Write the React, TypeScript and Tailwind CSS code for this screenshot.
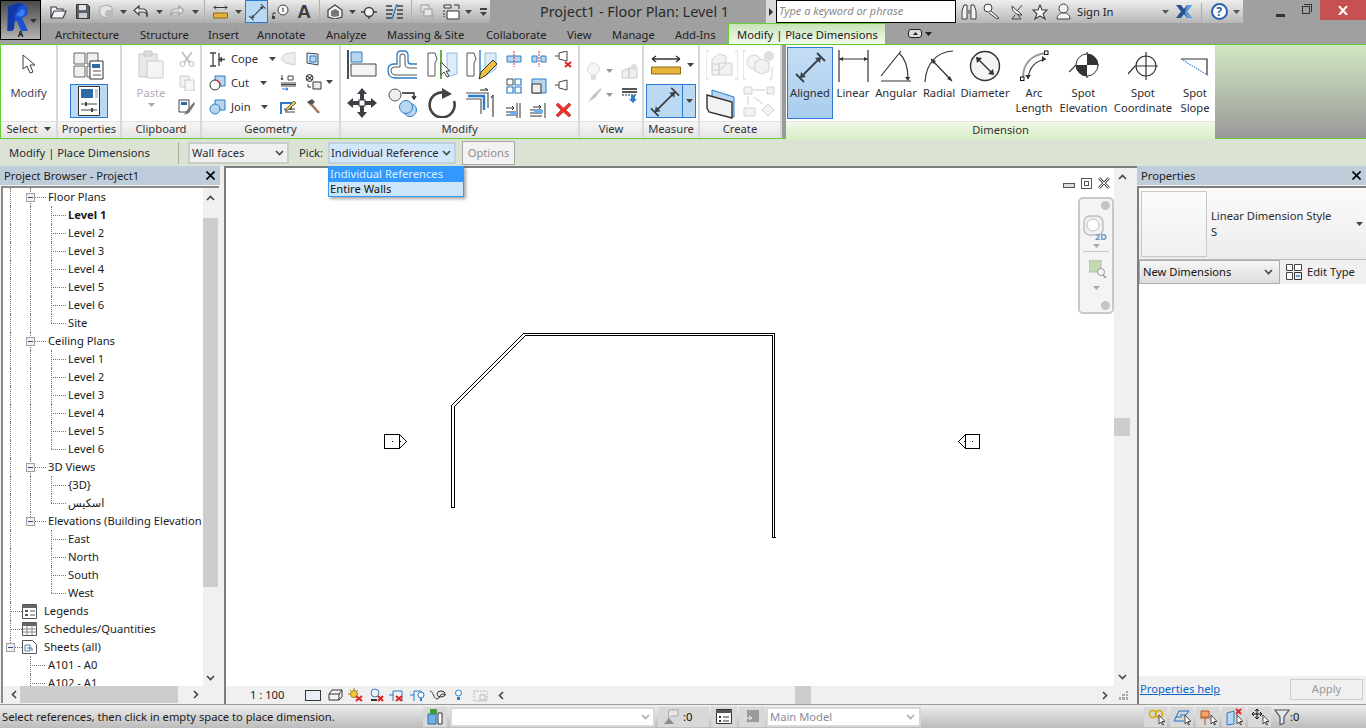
import type { ReactNode } from 'react';

const D = '#3a4047';
const B = '#2b7cc9';
const L = '#b8d6ef';
const G2 = '#e4e4e4';

function Ic({ w, h, children }: { w: number; h: number; children: ReactNode }) {
    return (
        <svg width={w} height={h} viewBox={`0 0 ${w} ${h}`} fill="none" className="shrink-0 block">
            {children}
        </svg>
    );
}

function Arrow({ c = '#444' }: { c?: string }) {
    return (
        <svg width="7" height="4" viewBox="0 0 7 4" className="shrink-0 block">
            <path d="M0 0h7L3.5 4z" fill={c} />
        </svg>
    );
}

function Chev({ c = '#444' }: { c?: string }) {
    return (
        <svg width="9" height="6" viewBox="0 0 9 6" fill="none" className="shrink-0 block">
            <path d="M1 1l3.5 3.5L8 1" stroke={c} strokeWidth="1.6" />
        </svg>
    );
}

function Slot({ cls, children }: { cls: string; children?: ReactNode }) {
    return <div className={`flex items-center justify-center shrink-0 h-full ${cls}`}>{children}</div>;
}

function Sep() {
    return (
        <div className="w-[8px] flex justify-center h-full shrink-0">
            <div className="w-px h-[23px] bg-[#b0b0b0]" />
        </div>
    );
}

function AlignedGlyph({ s = 22 }: { s?: number }) {
    return (
        <svg width={s} height={s} viewBox="0 0 32 32" fill="none" className="block shrink-0">
            <path d="M2 23l8 8M23 2l8 8M7 26L26 7" stroke={D} strokeWidth="1.8" />
            <path d="M6 27l1-6 5 5zM27 6l-6 1 5 5z" fill={D} />
        </svg>
    );
}

function RLogo() {
    return (
        <svg width="22" height="28" viewBox="0 0 22 28">
            <path d="M1 3L10 0l7 1 4 4-1 7-5 3 6 13h-7l-4-10-3 1-1 9-6 1z" fill="#1c50d0" />
            <path d="M1 3l9-3 7 1-6 4-3 7-1 14-6 2z" fill="#123aa6" />
            <path d="M9 12l6-6 3 1-1 5-4 2z" fill="#3f7cf0" />
        </svg>
    );
}

function QuickAccess() {
    return (
        <div className="flex items-center h-[23px] w-[449px] pl-[4px] bg-gradient-to-b from-[#ececec] to-[#adadad]">
            <Slot cls="w-[26px]">
                <Ic w={17} h={14}>
                    <path d="M1 13V2h5l1 2h6v2M1 13l3-7h12l-3 7z" stroke={D} strokeWidth="1.2" fill="#f5f5f5" />
                </Ic>
            </Slot>
            <Slot cls="w-[23px]">
                <Ic w={14} h={15}>
                    <path d="M.5.5h11l2 2v12H.5z" fill="#5a626b" stroke="#333" />
                    <path d="M3 1h7v5H3z" fill="#e6e6e6" />
                    <path d="M3 9h8v5H3z" fill="#c7ccd1" />
                </Ic>
            </Slot>
            <Slot cls="w-[24px]">
                <Ic w={16} h={15}>
                    <path d="M2 3l6-2 6 2v8l-6 3-6-3z" fill={G2} stroke="#aaa" />
                    <circle cx="11" cy="10" r="4" fill="#bbb" />
                </Ic>
            </Slot>
            <Slot cls="w-[10px]"><Arrow /></Slot>
            <Slot cls="w-[26px]">
                <Ic w={16} h={13}>
                    <path d="M6 1L1 5.5 6 10V7h4c2 0 4 1.500 4 5 1-5-1-8-4-8H6z" fill="#f5f5f5" stroke={D} strokeWidth="1.2" />
                </Ic>
            </Slot>
            <Slot cls="w-[10px]"><Arrow /></Slot>
            <Slot cls="w-[26px]">
                <Ic w={16} h={13}>
                    <path d="M10 1l5 4.500L10 10V7H6c-2 0-4 1.500-4 5-1-5 1-8 4-8h4z" fill="#e6e6e6" stroke="#a5a5a5" strokeWidth="1.2" />
                </Ic>
            </Slot>
            <Slot cls="w-[10px]"><Arrow /></Slot>
            <Sep />
            <Slot cls="w-[24px]">
                <Ic w={15} h={14}>
                    <path d="M1 2.500h13M1 2.500l2-2M1 2.500l2 2M14 2.500l-2-2M14 2.500l-2 2" stroke="#333" />
                    <path d="M.5 8h14v5H.5z" fill="#e2b23b" stroke="#8a6a14" />
                </Ic>
            </Slot>
            <Slot cls="w-[13px]"><Arrow /></Slot>
            <div className="w-[23px] h-[23px] shrink-0 flex items-center justify-center bg-[#b8d8f4] border border-[#2a7bd0]">
                <AlignedGlyph s={18} />
            </div>
            <Slot cls="w-[25px]">
                <Ic w={17} h={15}>
                    <circle cx="11" cy="6" r="5" fill="#f7f7f7" stroke={D} />
                    <path d="M11 4v4M10 4.500l1-.5" stroke={D} />
                    <path d="M1 14V9h3" stroke={D} />
                    <rect x="0" y="12" width="3" height="3" fill={D} />
                </Ic>
            </Slot>
            <Slot cls="w-[22px]">
                <span className="text-[19px] leading-none font-bold text-[#3d3d3d] font-['Liberation_Sans',sans-serif]">A</span>
            </Slot>
            <Sep />
            <Slot cls="w-[24px]">
                <Ic w={16} h={15}>
                    <path d="M1 6l7-5 7 5v7l-7 2-7-2z" fill="#f2f2f2" stroke={D} strokeWidth="1.2" />
                    <path d="M4 7l4-2 4 2v5l-4 1-4-1z" fill="#777" />
                </Ic>
            </Slot>
            <Slot cls="w-[10px]"><Arrow /></Slot>
            <Slot cls="w-[24px]">
                <Ic w={16} h={14}>
                    <circle cx="8" cy="7" r="4.500" fill="#f2f2f2" stroke={D} strokeWidth="1.4" />
                    <path d="M0 7h3M13 7h3M8 11v3" stroke={D} strokeWidth="1.4" />
                </Ic>
            </Slot>
            <Slot cls="w-[26px]">
                <Ic w={17} h={15}>
                    <path d="M0 2h6M0 6h7M0 10h6M0 14h6M11 2h6M11 6h6M11 10h6M11 14h6" stroke={D} strokeWidth="1.6" />
                    <path d="M6 15L11 0" stroke={B} strokeWidth="1.4" />
                </Ic>
            </Slot>
            <Sep />
            <Slot cls="w-[24px]">
                <Ic w={15} h={15}>
                    <path d="M1 1h8v7H1z" fill="#e4e4e4" stroke="#9a9a9a" />
                    <path d="M4 5h8v7H4z" fill="#e4e4e4" stroke="#9a9a9a" />
                    <path d="M10 11l4 4M14 11l-4 4" stroke="#aaa" />
                </Ic>
            </Slot>
            <Slot cls="w-[24px]">
                <Ic w={17} h={16}>
                    <path d="M1 1h7v3H1z" fill="#eee" stroke="#333" />
                    <path d="M4 7h12v8H4z" fill="#fff" stroke="#333" />
                    <path d="M11 1h5v4" stroke="#333" />
                    <path d="M1 6v7" stroke="#333" strokeDasharray="2 1" />
                </Ic>
            </Slot>
            <Slot cls="w-[10px]"><Arrow /></Slot>
            <Slot cls="w-[20px]">
                <div className="flex flex-col gap-[2px] items-center">
                    <div className="w-[7px] h-[2px] bg-[#444]" />
                    <Arrow />
                </div>
            </Slot>
        </div>
    );
}

function InfoCenter() {
    return (
        <div className="flex items-center h-[23px] w-[287px] shrink-0 pl-[4px] bg-gradient-to-b from-[#efefef] to-[#b7b7b7]">
            <Slot cls="w-[17px]">
                <Ic w={16} h={16}>
                    <path d="M1 7l2-6h3v14H1zM10 1h3l2 6v8h-5z" fill="#f3f3f3" stroke={D} />
                    <path d="M6 6h4v4H6z" fill="#888" />
                </Ic>
            </Slot>
            <Slot cls="w-[29px]">
                <Ic w={17} h={17}>
                    <circle cx="5" cy="5" r="4" fill="#f5f5f5" stroke={D} />
                    <path d="M8 8l8 7-2 1-8-6" fill="#eee" stroke={D} />
                </Ic>
            </Slot>
            <Slot cls="w-[23px]">
                <Ic w={16} h={17}>
                    <path d="M2 3c0 6 4 9 10 9z" fill="#f5f5f5" stroke={D} />
                    <path d="M7 8l5-6M5 12l-3 4h9l-3-4" stroke={D} />
                </Ic>
            </Slot>
            <Slot cls="w-[21px]">
                <Ic w={16} h={16}>
                    <path d="M8 1l2 5h5l-4 4 2 5-5-3-5 3 2-5-4-4h5z" fill="#f8f8f8" stroke={D} strokeWidth="1.1" />
                </Ic>
            </Slot>
            <Slot cls="w-[27px]">
                <Ic w={15} h={17}>
                    <circle cx="7.500" cy="5.500" r="4.500" fill="#f5f5f5" stroke={D} />
                    <path d="M1 16c0-4 3-5 4-6h5c1 1 4 2 4 6z" fill="#f5f5f5" stroke={D} />
                </Ic>
            </Slot>
            <span className="w-[83px] shrink-0 text-[#1c1c1c]">Sign In</span>
            <Slot cls="w-[10px]"><Arrow c="#555" /></Slot>
            <Slot cls="w-[28px]">
                <Ic w={17} h={15}>
                    <path d="M0 1h5l3 4 3-4h5l-5 6.500 5 6.500h-5l-3-4-3 4H0l5-6.500z" fill="#26538f" />
                    <path d="M11 1h5l-5 6.500 5 6.500h-5l-2-5z" fill="#5b9be0" />
                </Ic>
            </Slot>
            <div className="w-px h-[18px] bg-[#aaa] ml-[3px] mr-[4px] shrink-0" />
            <Slot cls="w-[26px]">
                <div className="w-[17px] h-[17px] rounded-full border-2 border-[#2a62ad] bg-white flex items-center justify-center text-[#2a62ad] text-[12px] font-bold leading-none">?</div>
            </Slot>
            <Slot cls="w-[8px]"><Arrow c="#555" /></Slot>
        </div>
    );
}

function TitleBar() {
    return (
        <div className="flex items-center h-[23px]">
            <QuickAccess />
            <div className="w-[270px] shrink-0 pl-[50px] text-[14.4px] leading-[23px] text-[#2a2a2a] whitespace-nowrap">Project1 - Floor Plan: Level 1</div>
            <div className="w-[6px] h-[23px] shrink-0" />
            <div className="w-[10px] h-[23px] shrink-0 bg-[#d9d9d9] flex items-center justify-center">
                <svg width="4" height="8" viewBox="0 0 4 8"><path d="M0 0l4 4-4 4z" fill="#333" /></svg>
            </div>
            <div className="w-[180px] h-[23px] shrink-0 bg-white border border-black px-[2px] italic text-[#8a8a8a] leading-[20px] text-[11px]">Type a keyword or phrase</div>
            <InfoCenter />
            <div className="flex-1 flex items-center h-[23px] justify-end">
                <div className="w-[9px] h-[3px] bg-[#333] mt-[8px] mr-[17px]" />
                <div className="relative w-[8px] h-[8px] border border-[#333] mr-[10px] mb-[4px]">
                    <div className="absolute -top-[3px] -right-[3px] w-[8px] h-[8px] border-t border-r border-[#333]" />
                </div>
                <div className="w-[46px] h-[20px] self-start bg-[#c75050] flex items-center justify-center">
                    <svg width="10" height="9" viewBox="0 0 10 9"><path d="M1 0l8 9M9 0l-8 9" stroke="#fff" strokeWidth="2" /></svg>
                </div>
            </div>
        </div>
    );
}

const tabs = [
    { t: 'Architecture', w: 'w-[85px]' },
    { t: 'Structure', w: 'w-[68px]' },
    { t: 'Insert', w: 'w-[49px]' },
    { t: 'Annotate', w: 'w-[69px]' },
    { t: 'Analyze', w: 'w-[61px]' },
    { t: 'Massing & Site', w: 'w-[99px]' },
    { t: 'Collaborate', w: 'w-[81px]' },
    { t: 'View', w: 'w-[45px]' },
    { t: 'Manage', w: 'w-[63px]' },
    { t: 'Add-Ins', w: 'w-[53px]' },
];

function TabRow() {
    return (
        <div className="flex items-end h-[21px] pl-[14px]">
            {tabs.map((x) => (
                <div key={x.t} className={`${x.w} shrink-0 h-full leading-[23px] text-[#222] whitespace-nowrap`}>{x.t}</div>
            ))}
            <div className="w-[158px] h-[21px] shrink-0 border border-b-0 border-[#66cc33] bg-gradient-to-b from-[#c9e4b8] to-[#f2faec] pl-[8px] leading-[22px] text-[#222] whitespace-nowrap">Modify | Place Dimensions</div>
            <div className="ml-[22px] flex items-center gap-[3px] h-full">
                <div className="w-[14px] h-[9px] rounded-[3px] border border-[#222] bg-[#ddd] flex items-center justify-center">
                    <svg width="5" height="3" viewBox="0 0 5 3"><path d="M2.500 0L5 3H0z" fill="#222" /></svg>
                </div>
                <Arrow c="#222" />
            </div>
        </div>
    );
}

function Panel({ w, title, children }: { w: string; title: ReactNode; children: ReactNode }) {
    return (
        <div className={`${w} shrink-0 flex flex-col bg-white border-r-2 border-[#d8d8d8]`}>
            <div className="h-[76px] flex shrink-0">{children}</div>
            <div className="flex-1 flex items-center justify-center leading-none pb-[2px] border-t border-[#e2e2e2] text-[#333] bg-gradient-to-b from-[#f6f6f6] to-[#e4e4e4]">
                {title}
            </div>
        </div>
    );
}

function ModifyPanel() {
    return (
        <Panel w="w-[57px]" title={<span className="flex items-center gap-[6px]">Select <Arrow /></span>}>
            <div className="w-full flex flex-col items-center pt-[9px]">
                <Ic w={14} h={20}>
                    <path d="M1 1v14l4-3 3 7 3-1-3-7h5z" fill="#fff" stroke={D} />
                </Ic>
                <span className="mt-[11px] text-[#4a3c52]">Modify</span>
            </div>
        </Panel>
    );
}

function PropertiesPanel() {
    return (
        <Panel w="w-[64px]" title="Properties">
            <div className="w-full flex flex-col items-center pt-[5px]">
                <Ic w={32} h={30}>
                    <path d="M1 3h11v11H1zM14 3h11v11H14zM1 16h11v11H1zM14 16h6v11h-6z" fill="#f0f0f0" stroke="#666" />
                    <path d="M17 11h13v18H17z" fill="#fff" stroke="#333" />
                    <path d="M19 14h8v4h-8z" fill="#2f6aa8" />
                    <path d="M20 21h8M20 25h8" stroke="#555" />
                </Ic>
                <div className="mt-[4px] w-[38px] h-[34px] bg-[#bcd9f4] border border-[#2a7bd0] flex items-center justify-center">
                    <Ic w={22} h={30}>
                        <path d="M.5.5h21v29H.5z" fill="#fff" stroke="#333" />
                        <path d="M3 3h12v9H3z" fill="#2f6aa8" />
                        <path d="M17 3h3v9h-3z" fill="#ccc" />
                        <path d="M3 18h16M3 24h16" stroke="#444" />
                        <path d="M8 16v4M14 22v4" stroke="#444" strokeWidth="2" />
                    </Ic>
                </div>
            </div>
        </Panel>
    );
}

function ClipboardPanel() {
    return (
        <Panel w="w-[80px]" title="Clipboard">
            <div className="flex w-full">
                <div className="w-[56px] flex flex-col items-center pt-[5px] pl-[2px]">
                    <Ic w={26} h={29}>
                        <path d="M1 4h18v23H1z" fill="#e8e8e8" stroke="#c8c8c8" />
                        <path d="M6 1h8v5H6z" fill="#ddd" stroke="#c8c8c8" />
                        <path d="M9 11h16v17H9z" fill="#f4f4f4" stroke="#cbcbcb" />
                    </Ic>
                    <span className="mt-[6px] text-[#b5adb5]">Paste</span>
                    <div className="mt-[2px]"><Arrow c="#aaa" /></div>
                </div>
                <div className="flex flex-col items-center pt-[6px] gap-[8px]">
                    <Ic w={16} h={16}>
                        <path d="M3 1l8 11M13 1L5 12" stroke="#bbb" strokeWidth="1.6" />
                        <circle cx="3.500" cy="13" r="2.500" stroke="#bbb" />
                        <circle cx="12.500" cy="13" r="2.500" stroke="#bbb" />
                    </Ic>
                    <Ic w={16} h={16}>
                        <path d="M1 1h9v11H1z" fill="#f1f1f1" stroke="#ccc" />
                        <path d="M6 5h9v11H6z" fill="#f6f6f6" stroke="#ccc" />
                    </Ic>
                    <Ic w={17} h={16}>
                        <path d="M1 1h10v12H1z" fill="#fff" stroke="#444" />
                        <path d="M3 3h6v3H3z" fill="#2f6aa8" />
                        <path d="M16 3l-7 8-3 5 5-2 6-9z" fill="#777" />
                    </Ic>
                </div>
            </div>
        </Panel>
    );
}

function GeoRow({ icon, label, w }: { icon: ReactNode; label: string; w: string }) {
    return (
        <div className="flex items-center h-[16px]">
            <div className="w-[22px] shrink-0">{icon}</div>
            <span className={`${w} shrink-0 text-[#2c2c34]`}>{label}</span>
            <Arrow />
        </div>
    );
}

function GeometryPanel() {
    return (
        <Panel w="w-[139px]" title="Geometry">
            <div className="flex pt-[6px] pl-[7px] w-full">
                <div className="w-[66px] flex flex-col gap-[8px] shrink-0">
                    <GeoRow
                        w="w-[38px]"
                        label="Cope"
                        icon={
                            <Ic w={17} h={15}>
                                <path d="M1 1h6M1 14h6M4 1v13M10 1v13M10 7.500h6" stroke="#444" strokeWidth="1.3" />
                                <path d="M9 7.500l4-3v6z" fill="#444" />
                            </Ic>
                        }
                    />
                    <GeoRow
                        w="w-[29px]"
                        label="Cut"
                        icon={
                            <Ic w={17} h={16}>
                                <path d="M6 1h10v10H6z" fill={L} stroke={B} />
                                <circle cx="6" cy="10" r="5" fill="#fff" stroke="#333" />
                                <path d="M6 5a5 5 0 0 1 5 5" stroke="#d22" strokeWidth="1.2" />
                            </Ic>
                        }
                    />
                    <GeoRow
                        w="w-[30px]"
                        label="Join"
                        icon={
                            <Ic w={17} h={16}>
                                <path d="M6 1h10v10H6z" fill={L} stroke={B} />
                                <circle cx="6" cy="10" r="5" fill={L} stroke={B} />
                            </Ic>
                        }
                    />
                </div>
                <div className="w-[25px] flex flex-col gap-[8px] items-center shrink-0">
                    <Ic w={16} h={16}>
                        <path d="M5 3l10-2v13L5 12 1 8z" fill="#eee" stroke="#d2d2d2" />
                    </Ic>
                    <Ic w={16} h={16}>
                        <path d="M2 0v5M1 3l1 2 1-2M8 1h5v4H8zM1 8h15M1 11h15M1 9.500h15" stroke="#444" />
                        <path d="M2 14h6M6 12.500l2 1.500-2 1.500" stroke={B} />
                    </Ic>
                    <Ic w={16} h={16}>
                        <path d="M1 15V4h10v7" stroke={B} strokeWidth="2" />
                        <path d="M5 13h10M4 10h11" stroke="#444" />
                        <path d="M6 10l8-8 2 2-8 7-3 1z" fill="#f1c84b" stroke="#333" strokeWidth=".7" />
                    </Ic>
                </div>
                <div className="flex flex-col gap-[8px] shrink-0 w-[35px] pl-[5px]">
                    <Ic w={15} h={15}>
                        <path d="M2 2l11 1v11l-11-2z" fill="#dcecf9" stroke="#445" />
                        <path d="M5 5h6v6H5z" fill={L} stroke={B} />
                    </Ic>
                    <div className="flex items-center gap-[4px]">
                        <Ic w={17} h={16}>
                            <circle cx="4.500" cy="4" r="3.500" fill="#ddd" stroke="#333" />
                            <path d="M2 2l5 4M7 2L2 6M3 10v3h3" stroke="#333" />
                            <path d="M8 8h8v7H8z" fill="#eee" stroke="#333" />
                        </Ic>
                        <Arrow />
                    </div>
                    <Ic w={16} h={16}>
                        <path d="M2 4l5-3 3 3-4 4z" fill="#555" />
                        <path d="M6 6l8 9" stroke="#a4705c" strokeWidth="2.4" />
                    </Ic>
                </div>
            </div>
        </Panel>
    );
}

function BigModify() {
    return (
        <div className="grid grid-cols-[40px_40px_39px_35px] w-[160px] pl-[6px] pt-[5px] gap-y-[4px] shrink-0">
            <Ic w={30} h={29}>
                <path d="M1 0v29" stroke="#222" strokeWidth="1.6" />
                <path d="M4 2h11v10H4z" fill={L} stroke={B} />
                <path d="M4 14h25v12H4z" fill="#f4f4f4" stroke="#444" />
            </Ic>
            <Ic w={30} h={29}>
                <path d="M1 20Q1 14 7 14H10V5Q10 1 14 1H17Q21 1 21 5V11Q21 14 24 14H30M1 20Q1 28 8 28H30" stroke={B} strokeWidth="1.3" />
                <path d="M4 20Q4 17 8 17H13V6Q13 4 15 4H16Q18 4 18 6V14Q18 18 23 18H30M4 20Q4 25 9 25H30" stroke="#555" />
            </Ic>
            <Ic w={31} h={29}>
                <path d="M1 3h7l2 6-2 4v13H1z" fill="#fff" stroke="#555" />
                <path d="M20 3l10 0v21l-10 3z" fill="#dcecf9" stroke="#8ebbe3" />
                <path d="M14 0v29" stroke="#44b02a" strokeWidth="1.8" />
                <path d="M14 12v13l3-3 3 5 2-1-3-5h4z" fill="#fff" stroke="#444" />
            </Ic>
            <Ic w={31} h={31}>
                <path d="M1 3h7l2 6-2 4v13H1z" fill="#fff" stroke="#555" />
                <path d="M19 3h11v16l-11 7z" fill="#dcecf9" stroke="#8ebbe3" />
                <path d="M14 0v26" stroke={B} strokeWidth="1.4" />
                <path d="M13 29l2-7 12-12 4 4-12 12z" fill="#f0c040" stroke="#333" />
            </Ic>
            <Ic w={30} h={30}>
                <path d="M15 0l5 6h-3v7h-4V6h-3zM15 30l5-6h-3v-7h-4v7h-3zM0 15l6-5v3h7v4H6v3zM30 15l-6-5v3h-7v4h7v3z" fill="#3a3f45" />
                <rect x="12" y="12" width="6" height="6" fill="#fff" stroke="#333" />
            </Ic>
            <Ic w={30} h={30}>
                <circle cx="8" cy="7" r="6" fill="#eee" stroke="#555" />
                <path d="M15 5h12v5M25 8l2 3 2-3" stroke="#222" strokeWidth="1.3" />
                <circle cx="23" cy="22" r="6.500" fill={L} stroke={B} />
                <circle cx="19" cy="19" r="6.500" fill={L} stroke={B} />
            </Ic>
            <Ic w={30} h={30}>
                <path d="M19 5A12.500 12.500 0 1 0 27 13" stroke="#444" strokeWidth="2.6" />
                <path d="M15 0l10 6-10 5z" fill="#444" />
            </Ic>
            <Ic w={30} h={30}>
                <path d="M0 5h22v15M0 11h15v15" stroke="#555" strokeWidth="1.2" />
                <path d="M2 8h16v14" stroke={B} strokeWidth="2.4" />
                <path d="M14 2h8l-3-2M27 29V7l-2 3" stroke="#222" />
            </Ic>
        </div>
    );
}

function SmallModify() {
    return (
        <div className="grid grid-cols-3 w-[75px] pt-[6px] gap-y-[8px] justify-items-center shrink-0">
            <Ic w={16} h={16}>
                <path d="M1 5h14v6H1z" fill={L} stroke={B} />
                <path d="M8 0v16" stroke="#c33" strokeDasharray="2 1" />
            </Ic>
            <Ic w={16} h={16}>
                <path d="M1 5h5v6H1zM10 5h5v6h-5z" fill={L} stroke={B} />
                <path d="M8 0v16" stroke="#c33" strokeDasharray="2 1" />
            </Ic>
            <Ic w={17} h={17}>
                <path d="M0 5h4M4 2l8-2v10l-8-2z" fill="#fff" stroke="#444" />
                <path d="M10 11l6 5M16 11l-6 5" stroke="#d22" strokeWidth="2" />
            </Ic>
            <Ic w={16} h={16}>
                <path d="M1 1h6v6H1z" stroke="#444" />
                <path d="M9 1h6v6H9zM1 9h6v6H1zM9 9h6v6H9z" fill="#fff" stroke={B} strokeWidth="1.2" />
            </Ic>
            <Ic w={16} h={16}>
                <path d="M1 1h14v14H1z" fill={L} stroke={B} />
                <path d="M1 6h9v9H1z" fill="#eee" stroke="#333" />
            </Ic>
            <Ic w={17} h={16}>
                <path d="M0 7h4M4 4l8-2v10l-8-2z" fill="#fff" stroke="#444" />
            </Ic>
            <Ic w={16} h={16}>
                <path d="M14 0v15M11 0v15" stroke="#333" />
                <path d="M0 5h8M6 3l2 2-2 2M0 9h10M0 12h10" stroke="#333" />
                <path d="M4 9h7v3H4z" fill="#6cb0ee" />
            </Ic>
            <Ic w={17} h={16}>
                <path d="M15 0v15" stroke="#333" />
                <path d="M3 4h8M9 2l2 2-2 2M0 7h12M0 10h12M0 13h12" stroke="#333" />
                <path d="M4 7h9v3H4z" fill="#6cb0ee" />
            </Ic>
            <Ic w={15} h={14}>
                <path d="M2 0L0 2l5 5-5 5 2 2 5.500-5 5.500 5 2-2-5-5 5-5-2-2-5.500 5z" fill="#e33" stroke="#a22" strokeWidth=".6" />
            </Ic>
        </div>
    );
}

function ViewPanel() {
    return (
        <Panel w="w-[64px]" title="View">
            <div className="w-full flex flex-col pl-[6px] pt-[16px] gap-[6px]">
                <div className="flex items-center h-[20px]">
                    <Ic w={15} h={18}>
                        <circle cx="7.500" cy="7" r="6" fill="#f5f5f5" stroke="#ddd" />
                        <path d="M5 13h5v5H5z" fill="#ddd" />
                    </Ic>
                    <div className="ml-[5px] mr-[8px]"><Arrow c="#999" /></div>
                    <Ic w={17} h={16}>
                        <path d="M1 8l7-3v10H1zM8 5h8v10H8z" fill="#eee" stroke="#ccc" />
                        <circle cx="13" cy="4" r="3" fill="#ddd" />
                    </Ic>
                </div>
                <div className="flex items-center">
                    <Ic w={16} h={16}>
                        <path d="M15 1L7 8l-5 7 7-4 6-8z" fill="#c4c4c4" />
                    </Ic>
                    <div className="ml-[4px] mr-[9px]"><Arrow c="#999" /></div>
                    <Ic w={16} h={15}>
                        <path d="M0 1h15M0 4h15" stroke="#222" strokeWidth="1.3" />
                        <path d="M0 7h15" stroke="#222" strokeDasharray="2 1" />
                        <path d="M9 7h4v4h2l-4 4-4-4h2z" fill={B} />
                    </Ic>
                </div>
            </div>
        </Panel>
    );
}

function MeasurePanel() {
    return (
        <Panel w="w-[56px]" title="Measure">
            <div className="w-full flex flex-col items-center pt-[9px]">
                <div className="flex items-center gap-[6px] pl-[2px] h-[22px]">
                    <Ic w={30} h={21}>
                        <path d="M1 4h28M1 4l4-3M1 4l4 3M29 4l-4-3M29 4l-4 3" stroke="#333" strokeWidth="1.3" />
                        <path d="M.5 12h29v7H.5z" fill="#e6b43d" stroke="#8a6a14" />
                    </Ic>
                    <Arrow />
                </div>
                <div className="mt-[8px] flex h-[34px] w-[50px] border border-[#2a7bd0] bg-[#bcd9f4]">
                    <div className="flex-1 flex items-center justify-center"><AlignedGlyph s={31} /></div>
                    <div className="w-[13px] border-l border-[#2a7bd0] flex items-center justify-center"><Arrow /></div>
                </div>
            </div>
        </Panel>
    );
}

function CreatePanel() {
    return (
        <Panel w="w-[82px]" title="Create">
            <div className="w-full grid grid-cols-2 pl-[6px] pt-[5px] gap-y-[5px]">
                <Ic w={32} h={30}>
                    <path d="M3 1H0v28h3M29 1h3v28h-3" stroke="#d4d4d4" />
                    <path d="M6 9l7-5 7 2v9l-7 5H6zM13 13h13v12H13zM6 14h7v11H6z" fill="#f2f2f2" stroke="#d2d2d2" />
                </Ic>
                <Ic w={32} h={30}>
                    <path d="M3 1H0v28h3M29 17v12h-3" stroke="#d4d4d4" />
                    <circle cx="11" cy="12" r="7" fill="#f4f4f4" stroke="#d2d2d2" />
                    <path d="M12 12l7-3 7 3v9l-7 3-7-3z" fill="#f2f2f2" stroke="#d2d2d2" />
                    <circle cx="26" cy="6" r="5" fill="#e0e0e0" />
                </Ic>
                <Ic w={33} h={34}>
                    <path d="M6 4l22 7v20L6 24z" fill={L} stroke={B} />
                    <path d="M1 9l25 7v16L3 26 1 22z" fill="#f2f2f2" stroke="#333" strokeWidth="1.4" />
                </Ic>
                <Ic w={32} h={32}>
                    <path d="M1 1h8v7H1zM24 1h7v7h-7z" fill="#f2f2f2" stroke="#d2d2d2" />
                    <path d="M10 4h12M5 10v9M11 11l9 7" stroke="#ccc" />
                    <path d="M1 22h11v8H1zM25 18l6 6-6 6-6-6z" fill="#f2f2f2" stroke="#d2d2d2" />
                </Ic>
            </div>
        </Panel>
    );
}

const dimTools: { l: string[]; w: string; icon: ReactNode }[] = [
    {
        l: ['Linear'],
        w: 'w-[40px]',
        icon: (
            <Ic w={31} h={32}>
                <path d="M1 0v32M30 0v32M1 9h29" stroke="#333" strokeWidth="1.2" />
                <path d="M1 9l4-2v4zM30 9l-4-2v4z" fill="#333" />
            </Ic>
        ),
    },
    {
        l: ['Angular'],
        w: 'w-[46px]',
        icon: (
            <Ic w={32} h={32}>
                <path d="M1 31h30M1 26L21 1M19 3c7 6 9 14 9 26" stroke="#333" strokeWidth="1.2" />
                <path d="M28 31l-3-4h5z" fill="#333" />
            </Ic>
        ),
    },
    {
        l: ['Radial'],
        w: 'w-[40px]',
        icon: (
            <Ic w={30} h={32}>
                <path d="M1 32C2 14 12 2 29 1M7 9l21 22" stroke="#333" strokeWidth="1.2" />
                <path d="M7 9l5 2-3 3zM28 31l-5-2 3-3z" fill="#333" />
            </Ic>
        ),
    },
    {
        l: ['Diameter'],
        w: 'w-[52px]',
        icon: (
            <Ic w={32} h={32}>
                <circle cx="16" cy="16" r="14.500" fill="#f4f4f4" stroke="#333" strokeWidth="1.4" />
                <path d="M8 8l16 16" stroke="#333" strokeWidth="1.4" />
                <path d="M7 7l6 1-5 5zM25 25l-6-1 5-5z" fill="#333" />
            </Ic>
        ),
    },
    {
        l: ['Arc', 'Length'],
        w: 'w-[46px]',
        icon: (
            <Ic w={30} h={32}>
                <path d="M4 28C4 14 12 5 27 3" stroke="#999" strokeWidth="2" />
                <path d="M9 29C10 17 16 11 27 9" stroke="#333" strokeWidth="1.2" />
                <path d="M27 9l-4-3v6zM9 29l-3-4h6z" fill="#333" />
                <rect x="1.500" y="27" width="3.500" height="3.500" fill="#fff" stroke="#111" />
                <rect x="25.500" y="1" width="3.500" height="3.500" fill="#fff" stroke="#111" />
            </Ic>
        ),
    },
    {
        l: ['Spot', 'Elevation'],
        w: 'w-[53px]',
        icon: (
            <Ic w={30} h={32}>
                <path d="M0 22l7-7h23M18 2v26" stroke="#333" strokeWidth="1.2" />
                <circle cx="18" cy="15" r="11" fill="#fff" stroke="#333" />
                <path d="M18 4a11 11 0 0 1 11 11H18zM18 15H7a11 11 0 0 0 11 11z" fill="#333" />
            </Ic>
        ),
    },
    {
        l: ['Spot', 'Coordinate'],
        w: 'w-[66px]',
        icon: (
            <Ic w={30} h={32}>
                <path d="M0 24l7-8h23M18 2v28" stroke="#333" strokeWidth="1.2" />
                <circle cx="18" cy="16" r="10" stroke="#333" strokeWidth="1.2" />
            </Ic>
        ),
    },
    {
        l: ['Spot', 'Slope'],
        w: 'w-[38px]',
        icon: (
            <Ic w={30} h={32}>
                <path d="M1 9h26v16" stroke="#333" strokeWidth="1.2" />
                <path d="M1 9l28 17" stroke="#4a86c8" strokeWidth="1.2" strokeDasharray="1.5 1" />
            </Ic>
        ),
    },
];

function DimensionPanel() {
    return (
        <div className="w-[429px] shrink-0 flex flex-col bg-white">
            <div className="h-[76px] flex shrink-0 pl-[1px]">
                <div className="w-[46px] h-[72px] mt-[2px] shrink-0 flex flex-col items-center border border-[#2a7bd0] bg-gradient-to-b from-[#c5def5] to-[#a9cdee] pt-[3px]">
                    <AlignedGlyph s={32} />
                    <span className="mt-[2px] text-[#2c2c34] leading-[15px]">Aligned</span>
                </div>
                {dimTools.map((d) => (
                    <div key={d.l.join(' ')} className={`${d.w} shrink-0 flex flex-col items-center pt-[5px]`}>
                        {d.icon}
                        <span className="mt-[3px] text-[#2c2c34] text-center leading-[15px] whitespace-nowrap">
                            {d.l.map((x) => (
                                <span key={x} className="block">{x}</span>
                            ))}
                        </span>
                    </div>
                ))}
            </div>
            <div className="flex-1 flex items-center justify-center pb-[2px] text-[#333] border-t border-[#e2e2e2] bg-gradient-to-b from-[#f0f9e8] to-[#d7edc5]">Dimension</div>
        </div>
    );
}

function Ribbon() {
    return (
        <div className="flex h-[95px] border-y border-l border-[#66cc33] bg-gradient-to-b from-[#d2e8c2] to-[#999999]">
            <ModifyPanel />
            <PropertiesPanel />
            <ClipboardPanel />
            <GeometryPanel />
            <Panel w="w-[239px]" title="Modify">
                <BigModify />
                <SmallModify />
            </Panel>
            <ViewPanel />
            <MeasurePanel />
            <CreatePanel />
            <div className="w-[4px] shrink-0 bg-[#9a9a9a]" />
            <DimensionPanel />
        </div>
    );
}

function Dropdown() {
    return (
        <div className="absolute left-[328px] top-[166px] w-[136px] h-[31px] z-10 border border-[#3399ff] bg-[#cbe6fa] shadow-[2px_2px_3px_rgba(0,0,0,0.35)]">
            <div className="h-[15px] bg-[#3399ff] text-[#dff0ff] leading-[13px] px-[1px]">Individual References</div>
            <div className="h-[14px] text-[#111] leading-[14px] px-[1px]">Entire Walls</div>
        </div>
    );
}

function OptionsBar() {
    return (
        <div className="flex items-center h-[27px] bg-[#dbe4d4] text-[#2a2a34]">
            <span className="w-[178px] shrink-0 pl-[9px] whitespace-nowrap">Modify | Place Dimensions</span>
            <div className="w-px h-[22px] bg-[#a8b0a4] shrink-0" />
            <div className="ml-[9px] w-[101px] h-[22px] shrink-0 flex items-center justify-between border-2 border-[#c8cdc8] bg-[#f0f0f0] pl-[2px] pr-[3px]">
                Wall faces <Chev />
            </div>
            <span className="ml-[10px] w-[29px] shrink-0">Pick:</span>
            <div className="w-[128px] h-[22px] shrink-0 flex items-center justify-between border-2 border-[#c0d2e0] bg-[#d2e8fa] pl-[1px] pr-[3px] whitespace-nowrap overflow-hidden">
                <span className="w-[109px] overflow-hidden">Individual Reference</span>
                <Chev />
            </div>
            <div className="ml-[6px] w-[53px] h-[24px] shrink-0 flex items-center justify-center border border-[#a8a8a8] bg-[#f2f2f2] text-[#8f8f8f]">Options</div>
        </div>
    );
}

type TreeNode = {
    t: string;
    tx: number;
    bold?: boolean;
    v?: number[];
    half?: number;
    h?: [number, number];
    box?: number;
    icon?: 'legend' | 'sched' | 'sheet';
};

const folder = (t: string): TreeNode => ({ t, tx: 45, v: [7, 27], box: 27, h: [32, 43] });
const leaf = (t: string, bold = false): TreeNode => ({ t, tx: 65, bold, v: [7, 27, 48], h: [48, 63] });
const lastLeaf = (t: string): TreeNode => ({ t, tx: 65, v: [7, 27], half: 48, h: [48, 63] });
const sheet = (t: string): TreeNode => ({ t, tx: 45, v: [27], h: [27, 42] });

const tree: TreeNode[] = [
    folder('Floor Plans'),
    leaf('Level 1', true),
    leaf('Level 2'),
    leaf('Level 3'),
    leaf('Level 4'),
    leaf('Level 5'),
    leaf('Level 6'),
    lastLeaf('Site'),
    folder('Ceiling Plans'),
    leaf('Level 1'),
    leaf('Level 2'),
    leaf('Level 3'),
    leaf('Level 4'),
    leaf('Level 5'),
    lastLeaf('Level 6'),
    folder('3D Views'),
    leaf('{3D}'),
    lastLeaf('اسکیس'),
    { t: 'Elevations (Building Elevation', tx: 45, v: [7], half: 27, box: 27, h: [32, 43] },
    { t: 'East', tx: 65, v: [7, 48], h: [48, 63] },
    { t: 'North', tx: 65, v: [7, 48], h: [48, 63] },
    { t: 'South', tx: 65, v: [7, 48], h: [48, 63] },
    { t: 'West', tx: 65, v: [7], half: 48, h: [48, 63] },
    { t: 'Legends', tx: 41, v: [7], h: [7, 19], icon: 'legend' },
    { t: 'Schedules/Quantities', tx: 41, v: [7], h: [7, 19], icon: 'sched' },
    { t: 'Sheets (all)', tx: 41, half: 7, h: [12, 19], box: 7, icon: 'sheet' },
    sheet('A101 - A0'),
    sheet('A102 - A1'),
];

function TreeIcon({ kind }: { kind: 'legend' | 'sched' | 'sheet' }) {
    if (kind === 'sheet') {
        return (
            <Ic w={15} h={14}>
                <path d="M.5.5h10l4 4v9H.5z" fill="#fff" stroke="#555" />
                <path d="M3 5h5v6H3zM5 8h5v3" stroke="#5c7ea0" />
            </Ic>
        );
    }
    if (kind === 'sched') {
        return (
            <Ic w={15} h={14}>
                <path d="M.5.5h14v13H.5z" fill="#fff" stroke="#555" />
                <path d="M0 1h15v3H0z" fill="#666" />
                <path d="M1 7h13M1 10h13M5 4v9M10 4v9" stroke="#888" />
            </Ic>
        );
    }
    return (
        <Ic w={15} h={15}>
            <path d="M.5.5h14v14H.5z" fill="#fff" stroke="#555" />
            <path d="M0 1h15v3H0z" fill="#666" />
            <path d="M3 6h3v2H3zM3 10h3v2H3z" fill="#555" />
            <path d="M8 7h5M8 11h5" stroke="#555" />
        </Ic>
    );
}

function TreeRow({ n }: { n: TreeNode }) {
    return (
        <div className="relative h-[18px] shrink-0 whitespace-nowrap text-[#1a1a1a]">
            {(n.v ?? []).map((x) => (
                <div key={x} className="absolute top-0 h-full border-l border-dotted border-[#777]" style={{ left: x }} />
            ))}
            {n.half !== undefined && (
                <div className="absolute top-0 h-[9px] border-l border-dotted border-[#777]" style={{ left: n.half }} />
            )}
            {n.h && (
                <div className="absolute top-[9px] border-t border-dotted border-[#777]" style={{ left: n.h[0], width: n.h[1] - n.h[0] }} />
            )}
            {n.box !== undefined && (
                <div
                    className="absolute top-[5px] w-[9px] h-[9px] -ml-[4px] bg-[#f0f0f0] border border-[#a0a0a0] flex items-center justify-center"
                    style={{ left: n.box }}
                >
                    <div className="w-[5px] h-px bg-[#2a4f8a]" />
                </div>
            )}
            {n.icon && (
                <div className="absolute left-[19px] top-[2px]"><TreeIcon kind={n.icon} /></div>
            )}
            <span className={`absolute top-0 leading-[18px] ${n.bold ? 'font-bold' : ''}`} style={{ left: n.tx }}>
                {n.t}
            </span>
        </div>
    );
}

function PanelHeader({ title }: { title: string }) {
    return (
        <div className="h-[19px] shrink-0 flex items-center justify-between bg-[#bfcddb] pl-[4px] pr-[5px] text-[#222]">
            <span>{title}</span>
            <svg width="9" height="9" viewBox="0 0 9 9"><path d="M.5.5l8 8M8.500.5l-8 8" stroke="#000" strokeWidth="1.6" /></svg>
        </div>
    );
}

function UpChev() {
    return (
        <svg width="9" height="6" viewBox="0 0 9 6" fill="none" className="block">
            <path d="M1 5l3.500-3.500L8 5" stroke="#444" strokeWidth="1.6" />
        </svg>
    );
}

function SideChev({ dir }: { dir: 'l' | 'r' }) {
    return (
        <svg width="6" height="9" viewBox="0 0 6 9" fill="none" className="block shrink-0">
            <path d={dir === 'l' ? 'M5 1L1.500 4.500 5 8' : 'M1 1l3.500 3.500L1 8'} stroke="#444" strokeWidth="1.6" />
        </svg>
    );
}

function ProjectBrowser() {
    return (
        <div className="w-[220px] shrink-0 flex flex-col bg-[#f0f0f0]">
            <PanelHeader title="Project Browser - Project1" />
            <div className="flex-1 min-h-0 mx-[1px] mt-[1px] mb-[1px] flex flex-col border-t-2 border-l-2 border-[#8a8a8a]">
                <div className="flex-1 min-h-0 flex">
                    <div className="w-[200px] shrink-0 bg-white overflow-hidden flex flex-col">
                        {tree.map((n, i) => (
                            <TreeRow key={i} n={n} />
                        ))}
                    </div>
                    <div className="w-[15px] shrink-0 flex flex-col items-center bg-[#f0f0f0]">
                        <div className="h-[30px] pt-[7px]"><UpChev /></div>
                        <div className="w-full h-[369px] bg-[#cdcdcd]" />
                        <div className="flex-1" />
                        <div className="pb-[5px]"><Chev /></div>
                    </div>
                </div>
                <div className="h-[17px] shrink-0 flex items-center bg-[#f0f0f0] pl-[8px]">
                    <SideChev dir="l" />
                    <div className="ml-[3px] w-[158px] h-full bg-[#cdcdcd]" />
                    <div className="ml-[15px]"><SideChev dir="r" /></div>
                </div>
            </div>
        </div>
    );
}

function ViewBar() {
    return (
        <div className="h-[18px] shrink-0 flex items-center bg-[#f0f0f0] pl-[24px] text-[#1a1a1a]">
            <span className="w-[55px] shrink-0 whitespace-nowrap">1 : 100</span>
            <div className="w-[16px] h-[11px] shrink-0 border border-[#333] bg-[#e8eef4] mr-[7px]" />
            <Ic w={15} h={12}>
                <path d="M1 5l3-4h10v7l-3 3H1zM1 5h10v6M11 5l3-4" stroke="#333" fill="#f4f4f4" />
            </Ic>
            <div className="ml-[5px] mr-[7px]">
                <Ic w={15} h={14}>
                    <circle cx="6" cy="6" r="3.500" fill="#f3c93c" stroke="#a57f10" />
                    <path d="M6 0v2M0 6h2M2 2l1 1M10 2L9 3" stroke="#a57f10" />
                    <path d="M8 8l6 5M14 8l-6 5" stroke="#d22" strokeWidth="2" />
                </Ic>
            </div>
            <Ic w={14} h={14}>
                <circle cx="5" cy="5" r="4" stroke={B} />
                <path d="M1 12h6" stroke="#333" strokeWidth="2" />
                <path d="M8 8l5 5M13 8l-5 5" stroke="#d22" strokeWidth="2" />
            </Ic>
            <div className="ml-[5px] mr-[6px]">
                <Ic w={15} h={14}>
                    <path d="M0 7h5M4 3h9v10M4 3v10" stroke={B} />
                    <path d="M7 8l6 5M13 8l-6 5" stroke="#d22" strokeWidth="2" />
                </Ic>
            </div>
            <Ic w={15} h={14}>
                <path d="M0 7h4M4 3h7v10M4 3v10" stroke={B} />
                <circle cx="11" cy="7" r="3" fill="#fff" stroke={B} />
                <path d="M10 10h2v3h-2z" fill={B} />
            </Ic>
            <div className="ml-[5px] mr-[9px]">
                <Ic w={16} h={12}>
                    <path d="M0 2c3 0 4 8 7 8s3-5 5-5 3 1 4 1" stroke="#333" />
                    <ellipse cx="11" cy="5" rx="4" ry="3" stroke="#333" />
                </Ic>
            </div>
            <Ic w={7} h={12}>
                <circle cx="3.500" cy="4" r="3" fill="#fff" stroke={B} />
                <path d="M2 8h3v3H2z" fill={B} />
            </Ic>
            <div className="ml-[11px] mr-[10px]">
                <Ic w={15} h={13}>
                    <path d="M1 2h13v10H1z" stroke="#bbb" strokeDasharray="2 1" />
                    <path d="M7 6h5v5H7z" stroke="#bbb" />
                </Ic>
            </div>
            <SideChev dir="l" />
            <div className="flex-1" />
            <div className="w-[16px] h-full bg-[#cdcdcd] mr-[291px]" />
            <div className="mr-[11px]"><SideChev dir="r" /></div>
            <div className="w-[9px] h-[9px] grid grid-cols-3 gap-px mr-[9px]">
                <i /><i /><i className="bg-[#aaa]" />
                <i /><i className="bg-[#aaa]" /><i className="bg-[#aaa]" />
                <i className="bg-[#aaa]" /><i className="bg-[#aaa]" /><i className="bg-[#aaa]" />
            </div>
        </div>
    );
}

function NavBar() {
    return (
        <div className="absolute left-[852px] top-[29px] w-[36px] h-[117px] rounded-[5px] border-2 border-[#c8c8c8] bg-[#f4f4f4] flex flex-col items-center">
            <div className="self-end mr-[2px] mt-[2px] w-[9px] h-[9px] rounded-full bg-[#c4c4c4]" />
            <div className="mt-[5px]">
                <Ic w={28} h={26}>
                    <rect x="2" y="1" width="19" height="19" rx="6" stroke="#bdbdbd" strokeWidth="1.4" fill="#f0f0f0" />
                    <circle cx="11" cy="10" r="6" stroke="#bdbdbd" fill="#fff" />
                    <text x="13" y="25" fontSize="9" fontWeight="700" fill="#6c9ac9" fontFamily="Noto Sans">2D</text>
                </Ic>
            </div>
            <div className="mt-[3px]"><Arrow c="#aaa" /></div>
            <div className="mt-[3px] w-[26px] h-px bg-[#c8c8c8]" />
            <div className="mt-[8px] ml-[4px]">
                <Ic w={18} h={18}>
                    <path d="M0 0h12v12H0z" fill="#c0dbb0" stroke="#b8b8b8" />
                    <circle cx="12" cy="12" r="3.500" fill="#f4f4f4" stroke="#999" />
                    <path d="M14 15l3 3" stroke="#999" strokeWidth="1.6" />
                </Ic>
            </div>
            <div className="mt-[8px]"><Arrow c="#aaa" /></div>
            <div className="flex-1" />
            <div className="self-end mr-[2px] mb-[2px] w-[9px] h-[9px] rounded-full bg-[#c4c4c4]" />
        </div>
    );
}

function Drawing() {
    return (
        <svg className="absolute left-0 top-0" width="888" height="518" viewBox="226 168 888 518" fill="none" shapeRendering="crispEdges">
            <path d="M451.500 507.500V405.500l72-72h251v204" stroke="#000" />
            <path d="M454.500 507.500V406.500l71-71h247V537.500" stroke="#000" />
            <path d="M451 507.500h4M772 537.500h4" stroke="#000" />
            <path d="M384.500 434.500h15v14h-15zM399.500 434.500l7 7-7 7" stroke="#000" />
            <rect x="392" y="441" width="1" height="1" fill="#000" />
            <rect x="400" y="441" width="1" height="1" fill="#000" />
            <path d="M979.500 434.500h-14v14h14zM965.500 434.500l-7 7 7 7" stroke="#000" />
            <rect x="972" y="441" width="1" height="1" fill="#000" />
            <rect x="964" y="441" width="1" height="1" fill="#000" />
        </svg>
    );
}

function Canvas() {
    return (
        <div className="flex-1 min-w-0 flex flex-col border-l-2 border-[#7d7d7d]">
            <div className="flex-1 min-h-0 flex border-t-2 border-[#7d7d7d]">
                <div className="relative w-[888px] shrink-0 bg-white">
                    <Drawing />
                    <div className="absolute left-[837px] top-[9px] flex items-center gap-[6px]">
                        <div className="w-[12px] h-[5px] border border-[#555] bg-[#ddd] mt-[4px]" />
                        <div className="w-[11px] h-[11px] border border-[#555] flex items-center justify-center">
                            <div className="w-[5px] h-[5px] border border-[#555]" />
                        </div>
                        <Ic w={12} h={12}>
                            <path d="M1 1l10 10M11 1L1 11" stroke="#555" strokeWidth="2.6" />
                            <path d="M1 1l10 10M11 1L1 11" stroke="#fff" strokeWidth="1" />
                        </Ic>
                    </div>
                    <NavBar />
                </div>
                <div className="flex-1 flex flex-col bg-[#f0f0f0]">
                    <div className="w-[16px] flex flex-col items-center h-full">
                        <div className="pt-[6px]"><UpChev /></div>
                        <div className="mt-[238px] w-full h-[18px] bg-[#cdcdcd]" />
                        <div className="flex-1" />
                        <div className="pb-[6px]"><Chev /></div>
                    </div>
                </div>
            </div>
            <ViewBar />
        </div>
    );
}

function PropertiesSide() {
    return (
        <div className="w-[229px] shrink-0 flex flex-col bg-[#f0f0f0]">
            <PanelHeader title="Properties" />
            <div className="flex-1 min-h-0 flex flex-col mt-[1px] border-t-2 border-l-2 border-[#7d7d7d]">
                <div className="h-[72px] shrink-0 flex items-center bg-gradient-to-b from-[#fbfbfb] to-[#ececec] border-b border-[#bbb] pl-[2px]">
                    <div className="w-[66px] h-[66px] shrink-0 border border-[#c8c8c8] bg-gradient-to-b from-[#fbfbfb] to-[#f0f0f0]" />
                    <div className="ml-[4px] flex-1 leading-[16px] text-[#2a2a34]">
                        Linear Dimension Style
                        <br />S
                    </div>
                    <div className="mr-[3px]"><Arrow /></div>
                </div>
                <div className="h-[24px] shrink-0 flex items-center">
                    <div className="w-[141px] h-[24px] shrink-0 flex items-center justify-between border border-[#aaa] bg-gradient-to-b from-[#f6f6f6] to-[#dedede] px-[3px] pr-[6px] text-[#111]">
                        New Dimensions <Chev />
                    </div>
                    <div className="ml-[6px]">
                        <Ic w={16} h={16}>
                            <path d="M.5.5h6v6h-6zM8.500.5h7v6h-7zM.5 8.500h6v7h-6z" fill="#fff" stroke="#444" />
                            <path d="M8.500 8.500h7v7h-7z" fill="#eee" stroke="#333" />
                            <path d="M10 12h4" stroke="#2a7bd0" strokeWidth="1.4" />
                        </Ic>
                    </div>
                    <span className="ml-[5px] text-[#222]">Edit Type</span>
                </div>
                <div className="flex-1 bg-white" />
                <div className="h-[28px] shrink-0 flex items-center justify-between pl-[1px] pr-[3px] pb-[2px]">
                    <span className="text-[#0a66cc] underline">Properties help</span>
                    <div className="w-[73px] h-[21px] border border-[#cfcfcf] flex items-center justify-center text-[#9a9a9a]">Apply</div>
                </div>
            </div>
        </div>
    );
}

function Well({ cls, children }: { cls: string; children: ReactNode }) {
    return <div className={`h-[20px] shrink-0 flex items-center justify-center bg-[#d8d8d8] ${cls}`}>{children}</div>;
}

function Cur() {
    return <path d="M12 7v9l2-2 1.500 3 1-.5-1.500-3h3z" fill="#fff" stroke="#222" strokeWidth=".8" />;
}

function StatusBar() {
    return (
        <div className="h-[24px] shrink-0 flex items-center border-t border-[#9c9c9c] bg-gradient-to-b from-[#eeeeee] to-[#bcbcbc] text-[#1c1c1c]">
            <span className="w-[423px] shrink-0 pl-[2px] whitespace-nowrap">Select references, then click in empty space to place dimension.</span>
            <Well cls="w-[24px]">
                <Ic w={16} h={17}>
                    <path d="M1 6h8v10H1z" fill="#6fb1e6" stroke="#2a6ea8" />
                    <path d="M3 1h7v5H3z" fill="#3f9a3f" />
                    <path d="M11 5h4v11h-4z" fill="#fff" stroke="#333" />
                </Ic>
            </Well>
            <div className="ml-[3px] w-[205px] h-[20px] shrink-0 bg-white border-2 border-[#d8d8d8] flex items-center justify-end pr-[3px]"><Chev c="#aaa" /></div>
            <Well cls="ml-[3px] w-[51px] justify-start pl-[5px] gap-[4px]">
                <Ic w={16} h={16}>
                    <path d="M6 1h9v6H8l-3 3z" fill="#e8e8e8" stroke="#aaa" />
                    <path d="M1 15l5-6 5 6z" fill="#8c8c8c" />
                </Ic>
                <span className="text-[#111]">:0</span>
            </Well>
            <Well cls="ml-[2px] w-[26px]">
                <Ic w={16} h={15}>
                    <path d="M.5.5h15v14H.5z" fill="#fff" stroke="#333" />
                    <path d="M0 1h16v3H0z" fill="#555" />
                    <path d="M3 7h2v2H3zM3 11h2v2H3z" fill="#333" />
                    <path d="M7 8h6M7 12h6" stroke="#333" />
                </Ic>
            </Well>
            <Well cls="ml-[2px] w-[26px]">
                <Ic w={16} h={16}>
                    <path d="M3 1h12v12H3z" fill="#9a9a9a" />
                    <path d="M0 9h7M5 7l3 2-3 2" stroke="#eee" />
                </Ic>
            </Well>
            <div className="ml-[1px] w-[155px] h-[20px] shrink-0 bg-white border-2 border-[#d8d8d8] flex items-center justify-between pl-[2px] pr-[4px] text-[#8a8a9a]">
                Main Model <Chev c="#aaa" />
            </div>
            <div className="w-[220px] shrink-0" />
            <div className="flex items-center gap-[3px] ml-[3px]">
                <Well cls="w-[23px]">
                    <Ic w={18} h={18}>
                        <circle cx="6" cy="6" r="3.500" stroke="#d9a800" strokeWidth="1.6" />
                        <circle cx="12" cy="6" r="3.500" stroke="#d9a800" strokeWidth="1.6" />
                        <Cur />
                    </Ic>
                </Well>
                <Well cls="w-[23px]">
                    <Ic w={18} h={18}>
                        <path d="M1 13L6 3h10l-3 4H7M1 13h10M3 9h6" stroke="#1a6ec4" />
                        <Cur />
                    </Ic>
                </Well>
                <Well cls="w-[23px]">
                    <Ic w={18} h={18}>
                        <path d="M2 3h8v6H2z" fill="#f2a86a" stroke="#b4501e" />
                        <path d="M1 10h10M6 10v7" stroke="#b4501e" />
                        <Cur />
                    </Ic>
                </Well>
                <Well cls="w-[23px]">
                    <Ic w={18} h={18}>
                        <path d="M2 5l7-2v13l-7 1z" fill={L} stroke={B} />
                        <path d="M11 1l5 5M16 1l-5 5" stroke="#d22" strokeWidth="1.8" />
                        <Cur />
                    </Ic>
                </Well>
                <Well cls="w-[23px]">
                    <Ic w={18} h={18}>
                        <path d="M6 1v10M1 6h10M6 1L4 3M6 1l2 2M6 11L4 9M6 11l2-2M1 6l2-2M1 6l2 2M11 6L9 4M11 6L9 8" stroke="#111" />
                        <Cur />
                    </Ic>
                </Well>
                <Ic w={16} h={16}>
                    <path d="M1 1h14l-5 7v6l-4 2V8z" fill="#e2e6ea" stroke="#4a5560" strokeWidth="1.2" />
                </Ic>
                <span className="-ml-[3px] text-[#111]">:0</span>
            </div>
        </div>
    );
}

export default function App() {
    return (
        <div className="relative w-[1366px] h-[728px] overflow-hidden flex flex-col bg-[#f0f0f0] text-[11.2px] leading-[16px] font-['Noto_Sans','DejaVu_Sans',sans-serif]">
            <div className="relative flex flex-col shrink-0 bg-[#a0a0a0]">
                <div className="absolute left-0 top-0 w-[41px] h-[40px] z-10 border border-black bg-gradient-to-b from-[#4a4a4a] to-[#b4b4b4]">
                    <div className="pl-[6px] pt-[2px]"><RLogo /></div>
                    <div className="absolute right-[3px] top-[18px]"><Arrow c="#333" /></div>
                    <div className="absolute left-0 bottom-0 w-full text-center leading-[10px] text-[8px] font-bold text-[#111]">A</div>
                </div>
                <div className="pl-[41px]"><TitleBar /></div>
                <div className="pl-[41px]"><TabRow /></div>
                <Ribbon />
            </div>
            <OptionsBar />
            <Dropdown />
            <div className="flex-1 min-h-0 flex">
                <ProjectBrowser />
                <div className="w-[4px] shrink-0 bg-[#f0f0f0]" />
                <Canvas />
                <PropertiesSide />
            </div>
            <StatusBar />
        </div>
    );
}
